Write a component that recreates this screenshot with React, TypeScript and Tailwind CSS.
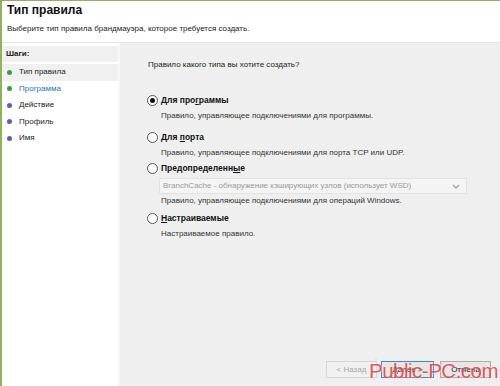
import React from "react";

const STEPS = [
  { label: "Тип правила", done: true, active: true },
  { label: "Программа", done: true, link: true },
  { label: "Действие" },
  { label: "Профиль" },
  { label: "Имя" },
];

function Radio({ checked }: { checked?: boolean }) {
  return (
    <span className="w-[11px] h-[11px] rounded-full border border-[#555] bg-white flex items-center justify-center shrink-0">
      {checked && <span className="w-[5px] h-[5px] rounded-full bg-[#111]" />}
    </span>
  );
}

function Option({
  title,
  desc,
  checked,
  children,
}: {
  title: React.ReactNode;
  desc: string;
  checked?: boolean;
  children?: React.ReactNode;
}) {
  return (
    <div className="flex flex-col">
      <div className="flex items-center gap-[3px] h-[14px]">
        <Radio checked={checked} />
        <span className="font-bold text-[8.5px] text-[#111]">{title}</span>
      </div>
      {children}
      <div className={`pl-[14px] text-[8px] text-[#333] leading-[12px] ${children ? "mt-[1px]" : "mt-[3px]"}`}>
        {desc}
      </div>
    </div>
  );
}

export default function App() {
  return (
    <div
      className="relative w-[500px] h-[386px] bg-[#efefef] border-l-2 border-t border-[#8fb35a] flex flex-col overflow-hidden"
      style={{ fontFamily: '"Liberation Sans", Arial, sans-serif' }}
    >
      <div className="bg-white h-[42px] pl-[5px] border-b border-[#e4e4e4]">
        <div className="font-bold text-[12px] text-[#111] leading-[18px]">Тип правила</div>
        <div className="text-[8px] text-[#222] mt-[4px] leading-[12px]">
          Выберите тип правила брандмауэра, которое требуется создать.
        </div>
      </div>
      <div className="flex flex-1">
        <div className="w-[118px] bg-white border-r-2 border-[#f7f7f7] pt-[3px]">
          <div className="bg-[#f0f0f0] h-[16px] pl-[4px] text-[8px] font-bold text-[#222] leading-[16px]">
            Шаги:
          </div>
          <div className="mt-[2px] flex flex-col">
            {STEPS.map((s) => (
              <div
                key={s.label}
                className={`flex items-center h-[16.5px] pl-[5px] gap-[7px] text-[8px] ${
                  s.active ? "bg-[#f0f0f0]" : ""
                } ${s.link ? "text-[#1b74c6]" : "text-[#222]"}`}
              >
                <span
                  className={`w-[5px] h-[5px] rounded-full ${s.done ? "bg-[#2fa82f]" : "bg-[#5a5ec2]"}`}
                />
                {s.label}
              </div>
            ))}
          </div>
        </div>
        <div className="flex-1 flex flex-col pl-[26px] pr-[8px] pt-[16px]">
          <div className="text-[8px] text-[#222] pl-[2px] leading-[12px]">Правило какого типа вы хотите создать?</div>
          <div className="flex flex-col mt-[22px] pl-[1px]">
            <Option
              checked
              title={
                <>
                  Для про<u>г</u>раммы
                </>
              }
              desc="Правило, управляющее подключениями для программы."
            />
            <div className="mt-[8px]">
              <Option
                title={
                  <>
                    Для <u>п</u>орта
                  </>
                }
                desc="Правило, управляющее подключениями для порта TCP или UDP."
              />
            </div>
            <div className="mt-[2px]">
              <Option
                title={
                  <>
                    Предопределенн<u>ы</u>е
                  </>
                }
                desc="Правило, управляющее подключениями для операций Windows."
              >
                <div className="ml-[12px] mt-[3px] mr-[25px] h-[16px] border border-[#e2e2e2] bg-[#f4f4f4] flex items-center justify-between pl-[3px] pr-[6px] text-[8px] text-[#9a9a9a]">
                  <span>BranchCache - обнаружение кэширующих узлов (использует WSD)</span>
                  <svg width="8" height="5" viewBox="0 0 8 5">
                    <path d="M1 1l3 3 3-3" fill="none" stroke="#a0a0a0" strokeWidth="1.3" />
                  </svg>
                </div>
              </Option>
            </div>
            <div className="mt-[4px]">
              <Option
                title={
                  <>
                    <u>Н</u>астраиваемые
                  </>
                }
                desc="Настраиваемое правило."
              />
            </div>
          </div>
          <div className="mt-auto mb-[8px] flex justify-end pr-[1px]">
            <button className="w-[51px] h-[17px] border border-[#d6d6d6] bg-[#f0f0f0] text-[8px] text-[#a8a8a8]">
              &lt; Назад
            </button>
            <button className="ml-[4px] w-[53px] h-[17px] border border-[#3c8ad4] bg-[#e6e6e6] text-[8px] text-[#111]">
              <u>Д</u>алее &gt;
            </button>
            <button className="ml-[6px] w-[51px] h-[17px] border border-[#adadad] bg-[#e6e6e6] text-[8px] text-[#111]">
              Отмена
            </button>
          </div>
        </div>
      </div>
      <div
        className="absolute left-[367px] top-[356px] whitespace-nowrap text-[20.5px] leading-[28px] text-[#de4a4a] opacity-90 tracking-[-0.5px]"
        style={{ fontFamily: '"Liberation Sans", Arial, sans-serif', textShadow: "0 0 2px #fff" }}
      >
        Public-PC.com
      </div>
    </div>
  );
}
